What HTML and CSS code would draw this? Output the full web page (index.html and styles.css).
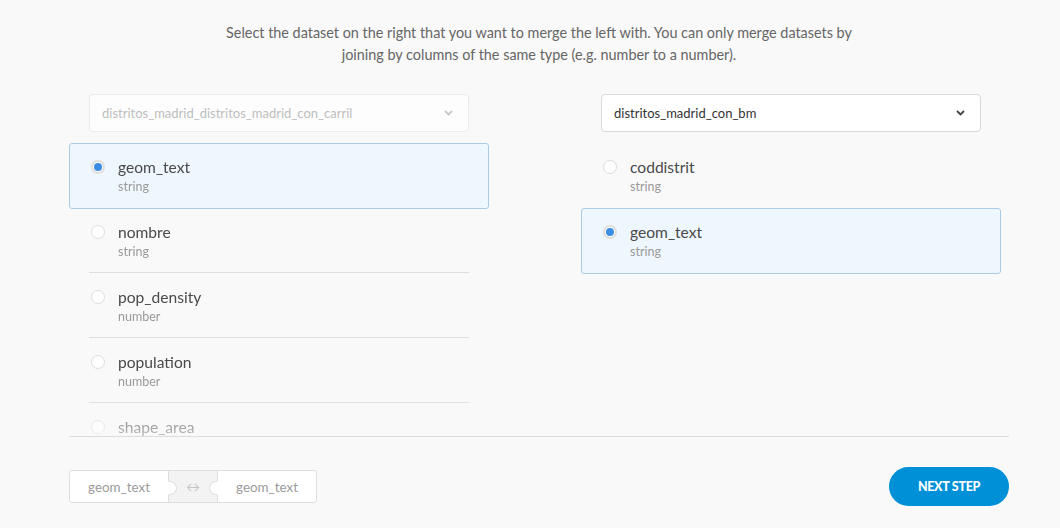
FILE: index.html
```html
<!DOCTYPE html>
<html>
<head>
<meta charset="utf-8">
<link rel="stylesheet" href="styles.css">
</head>
<body>
<div class="page">
  <p class="intro">Select the dataset on the right that you want to merge the left with. You can only merge datasets by joining by columns of the same type (e.g. number to a number).</p>
  <div class="columns">
    <div class="col">
      <div class="select select-disabled">
        <span>distritos_madrid_distritos_madrid_con_carril</span>
        <svg class="chev" width="9" height="6" viewBox="0 0 9 6"><path d="M1 1l3.5 3.5L8 1" fill="none" stroke="currentColor" stroke-width="1.8"/></svg>
      </div>
      <div class="list list-fade">
        <div class="item item-selected"><span class="radio radio-on"></span><div class="meta"><div class="name">geom_text</div><div class="type">string</div></div></div>
        <div class="item"><span class="radio"></span><div class="meta"><div class="name">nombre</div><div class="type">string</div></div></div>
        <div class="item"><span class="radio"></span><div class="meta"><div class="name">pop_density</div><div class="type">number</div></div></div>
        <div class="item"><span class="radio"></span><div class="meta"><div class="name">population</div><div class="type">number</div></div></div>
        <div class="item"><span class="radio"></span><div class="meta"><div class="name">shape_area</div><div class="type">number</div></div></div>
      </div>
    </div>
    <div class="col">
      <div class="select">
        <span>distritos_madrid_con_bm</span>
        <svg class="chev" width="9" height="6" viewBox="0 0 9 6"><path d="M1 1l3.5 3.5L8 1" fill="none" stroke="currentColor" stroke-width="1.8"/></svg>
      </div>
      <div class="list">
        <div class="item item-plain"><span class="radio"></span><div class="meta"><div class="name">coddistrit</div><div class="type">string</div></div></div>
        <div class="item item-selected"><span class="radio radio-on"></span><div class="meta"><div class="name">geom_text</div><div class="type">string</div></div></div>
      </div>
    </div>
  </div>
  <div class="footer">
    <div class="pill">
      <div class="seg">geom_text</div>
      <div class="seg seg-mid">↔</div>
      <div class="seg">geom_text</div>
    </div>
    <button class="next">NEXT STEP</button>
  </div>
</div>
</body>
</html>
```
FILE: styles.css
```css
* { box-sizing: border-box; }
html, body { margin: 0; padding: 0; background: #f9f9f9; }
body { font-family: Lato, "Open Sans", sans-serif; color: #484848; }
.page { width: 940px; margin-left: 69px; padding-top: 22px; }
.intro {
  margin: 0 auto;
  width: 660px;
  text-align: center;
  font-size: 14.4px;
  line-height: 22px;
  color: #666;
}
.columns { display: flex; gap: 92px; margin-top: 28px; }
.col { width: 420px; display: flex; flex-direction: column; }
.select {
  margin: 0 20px;
  height: 38px;
  background: #fff;
  border: 1px solid #d9d9d9;
  border-radius: 4px;
  display: flex;
  align-items: center;
  justify-content: space-between;
  padding: 0 15px 0 12px;
  font-size: 13px;
  color: #333;
}
.select .chev { color: #444; }
.select-disabled { border-color: #ececec; background: #fdfdfd; color: #bdbdbd; }
.select-disabled .chev { color: #c8c8c8; }
.list { margin-top: 11px; height: 293px; overflow: hidden; }
.list-fade {
  -webkit-mask-image: linear-gradient(to bottom, #000 250px, rgba(0,0,0,0.35) 293px);
  mask-image: linear-gradient(to bottom, #000 250px, rgba(0,0,0,0.35) 293px);
}
.item {
  margin: 0 20px;
  height: 65px;
  border-bottom: 1px solid #dedede;
  display: flex;
  align-items: flex-start;
  padding: 15px 0 0 2px;
}
.item-plain { border-bottom-color: transparent; }
.item-selected {
  margin: 0;
  height: 66px;
  margin-bottom: -1px;
  background: #eef6fe;
  border: 1px solid #a9cbe8;
  border-radius: 3px;
  padding: 14px 0 0 21px;
}
.radio {
  width: 14px;
  height: 14px;
  border-radius: 50%;
  border: 1px solid #dcdcdc;
  background: #fff;
  margin-top: 2px;
  margin-right: 13px;
  flex: none;
  display: flex;
  align-items: center;
  justify-content: center;
}
.radio-on { border: 2px solid #dedede; }
.radio-on::after {
  content: "";
  width: 8px;
  height: 8px;
  border-radius: 50%;
  background: #3b8de3;
}
.name { font-size: 15.6px; line-height: 18px; color: #4a4a4a; }
.type { font-size: 12.5px; line-height: 16px; color: #9a9a9a; margin-top: 3px; }
.footer {
  border-top: 1px solid #dcdcdc;
  height: 92px;
  display: flex;
  align-items: center;
  justify-content: space-between;
  padding-top: 8px;
}
.pill {
  display: flex;
  height: 33px;
  border: 1px solid #dedede;
  border-radius: 3px;
  background: #fff;
}
.seg {
  width: 98px;
  display: flex;
  align-items: center;
  justify-content: center;
  font-size: 13.4px;
  color: #9b9b9b;
}
.seg-mid {
  width: 50px;
  background: #f3f3f3;
  border-left: 1px solid #dedede;
  border-right: 1px solid #dedede;
  color: #c6c6c6;
  font-size: 14px;
  position: relative;
}
.seg-mid::before, .seg-mid::after {
  content: "";
  position: absolute;
  top: 50%;
  margin-top: -6px;
  width: 7px;
  height: 12px;
  background: #fff;
  border: 1px solid #dedede;
}
.seg-mid::before { left: -1px; border-left-color: #fff; border-radius: 0 7px 7px 0; }
.seg-mid::after { right: -1px; border-right-color: #fff; border-radius: 7px 0 0 7px; }
.next {
  width: 120px;
  height: 39px;
  border: none;
  border-radius: 20px;
  background: #0090d7;
  color: #fff;
  font-family: Lato, sans-serif;
  font-weight: 900;
  font-size: 12.5px;
  letter-spacing: -0.3px;
  cursor: pointer;
}
```
